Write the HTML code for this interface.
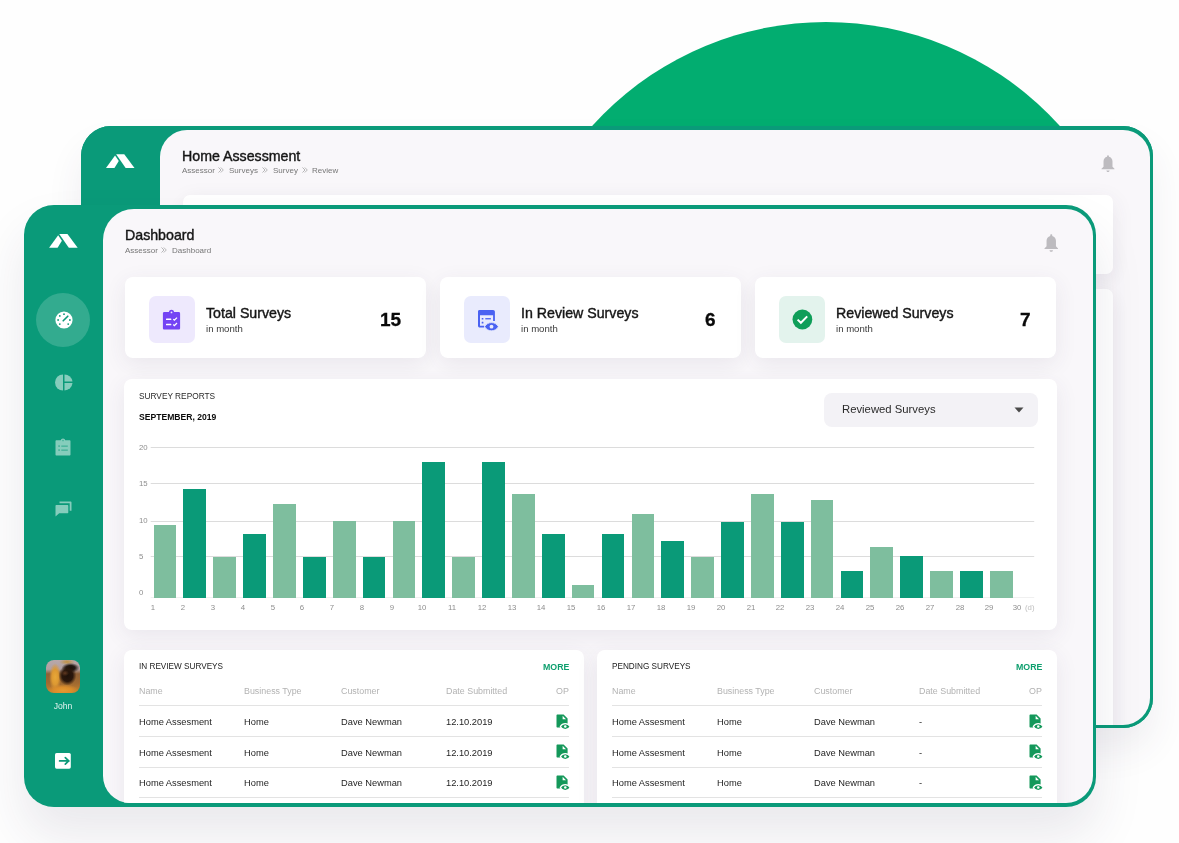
<!DOCTYPE html>
<html><head><meta charset="utf-8"><style>
*{margin:0;padding:0;box-sizing:border-box}
html,body{width:1179px;height:843px;overflow:hidden;background:#fefefe;font-family:"Liberation Sans",sans-serif;color:#111}
.a{position:absolute}
.t{position:absolute;white-space:nowrap;line-height:1;will-change:transform}
.card{position:absolute;background:#fff;border-radius:7px;box-shadow:0 6px 22px rgba(70,60,90,0.085)}
.clip{position:absolute;overflow:hidden}
.inner{position:absolute;width:1179px;height:843px}
svg{position:absolute;overflow:visible}
</style></head><body>
<div class="a" style="left:511px;top:22px;width:630px;height:630px;border-radius:50%;background:#02ad70"></div>
<div class="a" style="left:81px;top:126px;width:1072px;height:601.5px;background:#0a9a79;border-radius:30px;box-shadow:0 22px 36px rgba(60,50,90,0.08)"></div>
<div class="a" style="left:81px;top:126px;width:1072px;height:601.5px;background:#0a9a79;border-radius:30px"></div>
<div class="clip" style="left:160px;top:129.5px;width:989.5px;height:595px;border-radius:27px;background:#f9f7fa"><div class="inner" style="left:-160px;top:-129.5px"><div class="t" style="left:182.00px;top:148.98px;font-size:14.2px;color:#161616;font-weight:normal;-webkit-text-stroke:0.4px currentColor;">Home Assessment</div><div class="t" style="left:181.60px;top:167.23px;font-size:8.0px;color:#767676;font-weight:normal;">Assessor</div><div class="t" style="left:228.70px;top:167.23px;font-size:8.0px;color:#767676;font-weight:normal;">Surveys</div><div class="t" style="left:272.50px;top:167.23px;font-size:8.0px;color:#767676;font-weight:normal;">Survey</div><div class="t" style="left:312.40px;top:167.23px;font-size:8.0px;color:#767676;font-weight:normal;">Review</div><svg class="a" style="left:218.3px;top:167.3px" width="6" height="6" viewBox="0 0 6 6"><path d="M0.5 0.5 L3 3 L0.5 5.5 M2.8 0.5 L5.3 3 L2.8 5.5" stroke="#9a9a9a" stroke-width="0.7" fill="none"/></svg><svg class="a" style="left:262.3px;top:167.3px" width="6" height="6" viewBox="0 0 6 6"><path d="M0.5 0.5 L3 3 L0.5 5.5 M2.8 0.5 L5.3 3 L2.8 5.5" stroke="#9a9a9a" stroke-width="0.7" fill="none"/></svg><svg class="a" style="left:301.7px;top:167.3px" width="6" height="6" viewBox="0 0 6 6"><path d="M0.5 0.5 L3 3 L0.5 5.5 M2.8 0.5 L5.3 3 L2.8 5.5" stroke="#9a9a9a" stroke-width="0.7" fill="none"/></svg><svg class="a" style="left:1101px;top:155px" width="14" height="17.2" viewBox="0 0 14 18"><path d="M7 0.2c0.6 0 1 0.4 1 1v0.7c2.3 0.5 3.7 2.5 3.7 4.9v5.4l2.1 2.2v0.6H0.2v-0.6l2.1-2.2V6.8c0-2.4 1.4-4.4 3.7-4.9V1.2c0-0.6 0.4-1 1-1z" fill="#bdbbbf"/><path d="M5.3 16.2h3.4c0 0.9-0.8 1.6-1.7 1.6s-1.7-0.7-1.7-1.6z" fill="#bdbbbf"/></svg><div class="card" style="left:183px;top:195px;width:930px;height:79px"></div><div class="card" style="left:183px;top:289px;width:930px;height:600px"></div></div></div>
<svg class="a" style="left:106px;top:154px" width="28.5" height="14.3" viewBox="0 0 29 14"><path d="M0 14 L9.2 1.2 L13 6.8 L8.6 14 Z" fill="#fff"/><path d="M10.3 0 L18.6 0 L29 14 L20 14 Z" fill="#fff"/></svg>
<div class="a" style="left:24px;top:205px;width:1072px;height:602px;background:#0a9a79;border-radius:30px;box-shadow:0 28px 50px rgba(50,40,80,0.10)"></div>
<div class="clip" style="left:103px;top:209px;width:989.5px;height:594px;border-radius:31px 27px 27px 27px;background:#f9f7fa"><div class="inner" style="left:-103px;top:-209px"><div class="t" style="left:125.00px;top:227.98px;font-size:14.2px;color:#161616;font-weight:normal;-webkit-text-stroke:0.4px currentColor;">Dashboard</div><div class="t" style="left:124.90px;top:246.63px;font-size:8.0px;color:#767676;font-weight:normal;">Assessor</div><svg class="a" style="left:161.2px;top:247.2px" width="6" height="6" viewBox="0 0 6 6"><path d="M0.5 0.5 L3 3 L0.5 5.5 M2.8 0.5 L5.3 3 L2.8 5.5" stroke="#9a9a9a" stroke-width="0.7" fill="none"/></svg><div class="t" style="left:171.90px;top:246.63px;font-size:8.0px;color:#767676;font-weight:normal;">Dashboard</div><svg class="a" style="left:1044px;top:234px" width="14.5" height="18" viewBox="0 0 14 18"><path d="M7 0.2c0.6 0 1 0.4 1 1v0.7c2.3 0.5 3.7 2.5 3.7 4.9v5.4l2.1 2.2v0.6H0.2v-0.6l2.1-2.2V6.8c0-2.4 1.4-4.4 3.7-4.9V1.2c0-0.6 0.4-1 1-1z" fill="#bdbbbf"/><path d="M5.3 16.2h3.4c0 0.9-0.8 1.6-1.7 1.6s-1.7-0.7-1.7-1.6z" fill="#bdbbbf"/></svg><div class="card" style="left:125px;top:277px;width:301px;height:81px;border-radius:8px"></div><div class="a" style="left:149px;top:296px;width:46px;height:47px;background:#eee9fd;border-radius:7px"></div><div class="t" style="left:205.80px;top:305.68px;font-size:14.2px;color:#161616;font-weight:normal;-webkit-text-stroke:0.4px currentColor;">Total Surveys</div><div class="t" style="left:205.80px;top:323.67px;font-size:9.6px;color:#3a3a3a;font-weight:normal;">in month</div><div class="t" style="right:778.00px;top:309.72px;font-size:19px;color:#0a0a0a;font-weight:bold;-webkit-text-stroke:0.3px currentColor;">15</div><svg class="a" style="left:162px;top:309px" width="19" height="22" viewBox="0 0 19 22"><path d="M2.3 3h4.6c0.3-1.5 1.3-2.3 2.6-2.3s2.3 0.8 2.6 2.3h4.6c0.8 0 1.4 0.6 1.4 1.4v14.8c0 0.8-0.6 1.4-1.4 1.4H2.3c-0.8 0-1.4-0.6-1.4-1.4V4.4C0.9 3.6 1.5 3 2.3 3z" fill="#7444f4"/><circle cx="9.5" cy="3.4" r="0.9" fill="#eee9fd"/><rect x="4" y="9.4" width="5.3" height="1.5" rx="0.5" fill="#fff"/><rect x="4" y="14.8" width="5.3" height="1.5" rx="0.5" fill="#fff"/><path d="M11.3 10.1l1.1 1.1 2.6-2.6 M11.3 15.5l1.1 1.1 2.6-2.6" stroke="#fff" stroke-width="1.3" fill="none"/></svg><div class="card" style="left:440px;top:277px;width:301px;height:81px;border-radius:8px"></div><div class="a" style="left:464px;top:296px;width:46px;height:47px;background:#e9ebfd;border-radius:7px"></div><div class="t" style="left:520.80px;top:305.68px;font-size:14.2px;color:#161616;font-weight:normal;-webkit-text-stroke:0.4px currentColor;">In Review Surveys</div><div class="t" style="left:520.80px;top:323.67px;font-size:9.6px;color:#3a3a3a;font-weight:normal;">in month</div><div class="t" style="right:463.00px;top:309.72px;font-size:19px;color:#0a0a0a;font-weight:bold;-webkit-text-stroke:0.3px currentColor;">6</div><svg class="a" style="left:477px;top:309px" width="23" height="23" viewBox="0 0 23 23"><path d="M2.3 1h13.8c1 0 1.8 0.8 1.8 1.8v9.1h-1.8V6.2H3v10.6h4.2v1.7H2.8c-1 0-1.8-0.8-1.8-1.8V2.8C1 1.8 1.3 1 2.3 1z" fill="#4a62f2"/><rect x="4.7" y="8.9" width="1.7" height="1.7" rx="0.3" fill="#4a62f2"/><rect x="8.3" y="9.1" width="5.6" height="1.3" fill="#4a62f2"/><rect x="4.7" y="12.8" width="1.7" height="1.7" rx="0.3" fill="#4a62f2"/><path d="M7.6 17.7c1.6-2.6 3.9-4.1 6.9-4.1s5.3 1.5 6.9 4.1c-1.6 2.6-3.9 4.1-6.9 4.1s-5.3-1.5-6.9-4.1z" fill="#4a62f2" stroke="#e9ebfd" stroke-width="0.8"/><circle cx="14.5" cy="17.7" r="1.9" fill="#e9ebfd"/></svg><div class="card" style="left:755px;top:277px;width:301px;height:81px;border-radius:8px"></div><div class="a" style="left:779px;top:296px;width:46px;height:47px;background:#e3f3ed;border-radius:7px"></div><div class="t" style="left:835.80px;top:305.68px;font-size:14.2px;color:#161616;font-weight:normal;-webkit-text-stroke:0.4px currentColor;">Reviewed Surveys</div><div class="t" style="left:835.80px;top:323.67px;font-size:9.6px;color:#3a3a3a;font-weight:normal;">in month</div><div class="t" style="right:148.00px;top:309.72px;font-size:19px;color:#0a0a0a;font-weight:bold;-webkit-text-stroke:0.3px currentColor;">7</div><svg class="a" style="left:792px;top:309px" width="21" height="21" viewBox="0 0 21 21"><circle cx="10.4" cy="10.5" r="9.9" fill="#0f9e59"/><path d="M5.6 10.6l3.3 3.2 6.3-6.4" stroke="#fff" stroke-width="2" fill="none"/></svg><div class="card" style="left:124px;top:379px;width:932.5px;height:251px;border-radius:8px"></div><div class="t" style="left:138.80px;top:392.37px;font-size:8.3px;color:#2a2a2a;font-weight:normal;">SURVEY REPORTS</div><div class="t" style="left:138.80px;top:413.32px;font-size:8.6px;color:#0a0a0a;font-weight:bold;">SEPTEMBER, 2019</div><div class="a" style="left:824px;top:393px;width:214px;height:34px;background:#f3f2f6;border-radius:8px"></div><div class="t" style="left:842.40px;top:404.43px;font-size:11.3px;color:#2a2a2a;font-weight:normal;">Reviewed Surveys</div><svg class="a" style="left:1014px;top:407px" width="10" height="6" viewBox="0 0 10 6"><path d="M0.5 0.5h9L5 5.6z" fill="#4a4a4a"/></svg><svg class="a" style="left:0;top:0" width="1179" height="843"><rect x="150.7" y="447.0" width="883.5" height="1" fill="#dcdcdc"/><rect x="150.7" y="483.0" width="883.5" height="1" fill="#dcdcdc"/><rect x="150.7" y="521.0" width="883.5" height="1" fill="#dcdcdc"/><rect x="150.7" y="556.0" width="883.5" height="1" fill="#dcdcdc"/><rect x="150.7" y="597" width="883.5" height="1" fill="#f0f0f0"/></svg><div class="t" style="left:139.00px;top:443.70px;font-size:7.8px;color:#8e8e8e;font-weight:normal;">20</div><div class="t" style="left:139.00px;top:480.20px;font-size:7.8px;color:#8e8e8e;font-weight:normal;">15</div><div class="t" style="left:139.00px;top:516.70px;font-size:7.8px;color:#8e8e8e;font-weight:normal;">10</div><div class="t" style="left:139.00px;top:553.20px;font-size:7.8px;color:#8e8e8e;font-weight:normal;">5</div><div class="t" style="left:139.00px;top:589.20px;font-size:7.8px;color:#8e8e8e;font-weight:normal;">0</div><div class="a" style="left:153.60px;top:524.6px;width:22.7px;height:73.20px;background:#7ebe9e"></div><div class="a" style="left:183.47px;top:489px;width:22.7px;height:108.80px;background:#0a9a78"></div><div class="a" style="left:213.34px;top:556.6px;width:22.7px;height:41.20px;background:#7ebe9e"></div><div class="a" style="left:243.21px;top:534px;width:22.7px;height:63.80px;background:#0a9a78"></div><div class="a" style="left:273.08px;top:504px;width:22.7px;height:93.80px;background:#7ebe9e"></div><div class="a" style="left:302.95px;top:556.7px;width:22.7px;height:41.10px;background:#0a9a78"></div><div class="a" style="left:332.82px;top:521px;width:22.7px;height:76.80px;background:#7ebe9e"></div><div class="a" style="left:362.69px;top:556.7px;width:22.7px;height:41.10px;background:#0a9a78"></div><div class="a" style="left:392.56px;top:521px;width:22.7px;height:76.80px;background:#7ebe9e"></div><div class="a" style="left:422.43px;top:462px;width:22.7px;height:135.80px;background:#0a9a78"></div><div class="a" style="left:452.30px;top:556.7px;width:22.7px;height:41.10px;background:#7ebe9e"></div><div class="a" style="left:482.17px;top:462px;width:22.7px;height:135.80px;background:#0a9a78"></div><div class="a" style="left:512.04px;top:494px;width:22.7px;height:103.80px;background:#7ebe9e"></div><div class="a" style="left:541.91px;top:534px;width:22.7px;height:63.80px;background:#0a9a78"></div><div class="a" style="left:571.78px;top:585px;width:22.7px;height:12.80px;background:#7ebe9e"></div><div class="a" style="left:601.65px;top:534px;width:22.7px;height:63.80px;background:#0a9a78"></div><div class="a" style="left:631.52px;top:514.4px;width:22.7px;height:83.40px;background:#7ebe9e"></div><div class="a" style="left:661.39px;top:541px;width:22.7px;height:56.80px;background:#0a9a78"></div><div class="a" style="left:691.26px;top:556.7px;width:22.7px;height:41.10px;background:#7ebe9e"></div><div class="a" style="left:721.13px;top:521.5px;width:22.7px;height:76.30px;background:#0a9a78"></div><div class="a" style="left:751.00px;top:494px;width:22.7px;height:103.80px;background:#7ebe9e"></div><div class="a" style="left:780.87px;top:521.5px;width:22.7px;height:76.30px;background:#0a9a78"></div><div class="a" style="left:810.74px;top:500px;width:22.7px;height:97.80px;background:#7ebe9e"></div><div class="a" style="left:840.61px;top:571px;width:22.7px;height:26.80px;background:#0a9a78"></div><div class="a" style="left:870.48px;top:547px;width:22.7px;height:50.80px;background:#7ebe9e"></div><div class="a" style="left:900.35px;top:556px;width:22.7px;height:41.80px;background:#0a9a78"></div><div class="a" style="left:930.22px;top:571px;width:22.7px;height:26.80px;background:#7ebe9e"></div><div class="a" style="left:960.09px;top:571px;width:22.7px;height:26.80px;background:#0a9a78"></div><div class="a" style="left:989.96px;top:571px;width:22.7px;height:26.80px;background:#7ebe9e"></div><div class="t" style="left:53.10px;width:200px;text-align:center;top:603.70px;font-size:7.8px;color:#8e8e8e;font-weight:normal;">1</div><div class="t" style="left:82.97px;width:200px;text-align:center;top:603.70px;font-size:7.8px;color:#8e8e8e;font-weight:normal;">2</div><div class="t" style="left:112.84px;width:200px;text-align:center;top:603.70px;font-size:7.8px;color:#8e8e8e;font-weight:normal;">3</div><div class="t" style="left:142.71px;width:200px;text-align:center;top:603.70px;font-size:7.8px;color:#8e8e8e;font-weight:normal;">4</div><div class="t" style="left:172.58px;width:200px;text-align:center;top:603.70px;font-size:7.8px;color:#8e8e8e;font-weight:normal;">5</div><div class="t" style="left:202.45px;width:200px;text-align:center;top:603.70px;font-size:7.8px;color:#8e8e8e;font-weight:normal;">6</div><div class="t" style="left:232.32px;width:200px;text-align:center;top:603.70px;font-size:7.8px;color:#8e8e8e;font-weight:normal;">7</div><div class="t" style="left:262.19px;width:200px;text-align:center;top:603.70px;font-size:7.8px;color:#8e8e8e;font-weight:normal;">8</div><div class="t" style="left:292.06px;width:200px;text-align:center;top:603.70px;font-size:7.8px;color:#8e8e8e;font-weight:normal;">9</div><div class="t" style="left:321.93px;width:200px;text-align:center;top:603.70px;font-size:7.8px;color:#8e8e8e;font-weight:normal;">10</div><div class="t" style="left:351.80px;width:200px;text-align:center;top:603.70px;font-size:7.8px;color:#8e8e8e;font-weight:normal;">11</div><div class="t" style="left:381.67px;width:200px;text-align:center;top:603.70px;font-size:7.8px;color:#8e8e8e;font-weight:normal;">12</div><div class="t" style="left:411.54px;width:200px;text-align:center;top:603.70px;font-size:7.8px;color:#8e8e8e;font-weight:normal;">13</div><div class="t" style="left:441.41px;width:200px;text-align:center;top:603.70px;font-size:7.8px;color:#8e8e8e;font-weight:normal;">14</div><div class="t" style="left:471.28px;width:200px;text-align:center;top:603.70px;font-size:7.8px;color:#8e8e8e;font-weight:normal;">15</div><div class="t" style="left:501.15px;width:200px;text-align:center;top:603.70px;font-size:7.8px;color:#8e8e8e;font-weight:normal;">16</div><div class="t" style="left:531.02px;width:200px;text-align:center;top:603.70px;font-size:7.8px;color:#8e8e8e;font-weight:normal;">17</div><div class="t" style="left:560.89px;width:200px;text-align:center;top:603.70px;font-size:7.8px;color:#8e8e8e;font-weight:normal;">18</div><div class="t" style="left:590.76px;width:200px;text-align:center;top:603.70px;font-size:7.8px;color:#8e8e8e;font-weight:normal;">19</div><div class="t" style="left:620.63px;width:200px;text-align:center;top:603.70px;font-size:7.8px;color:#8e8e8e;font-weight:normal;">20</div><div class="t" style="left:650.50px;width:200px;text-align:center;top:603.70px;font-size:7.8px;color:#8e8e8e;font-weight:normal;">21</div><div class="t" style="left:680.37px;width:200px;text-align:center;top:603.70px;font-size:7.8px;color:#8e8e8e;font-weight:normal;">22</div><div class="t" style="left:710.24px;width:200px;text-align:center;top:603.70px;font-size:7.8px;color:#8e8e8e;font-weight:normal;">23</div><div class="t" style="left:740.11px;width:200px;text-align:center;top:603.70px;font-size:7.8px;color:#8e8e8e;font-weight:normal;">24</div><div class="t" style="left:769.98px;width:200px;text-align:center;top:603.70px;font-size:7.8px;color:#8e8e8e;font-weight:normal;">25</div><div class="t" style="left:799.85px;width:200px;text-align:center;top:603.70px;font-size:7.8px;color:#8e8e8e;font-weight:normal;">26</div><div class="t" style="left:829.72px;width:200px;text-align:center;top:603.70px;font-size:7.8px;color:#8e8e8e;font-weight:normal;">27</div><div class="t" style="left:859.59px;width:200px;text-align:center;top:603.70px;font-size:7.8px;color:#8e8e8e;font-weight:normal;">28</div><div class="t" style="left:889.46px;width:200px;text-align:center;top:603.70px;font-size:7.8px;color:#8e8e8e;font-weight:normal;">29</div><div class="t" style="left:917.00px;width:200px;text-align:center;top:603.70px;font-size:7.8px;color:#8e8e8e;font-weight:normal;">30</div><div class="t" style="left:1024.50px;top:603.70px;font-size:7.8px;color:#c0c0c0;font-weight:normal;">(d)</div><div class="card" style="left:124px;top:649.5px;width:460px;height:250px;border-radius:8px"></div><div class="t" style="left:139.00px;top:663.36px;font-size:8.2px;color:#222;font-weight:normal;">IN REVIEW SURVEYS</div><div class="t" style="right:610.00px;top:662.85px;font-size:8.8px;color:#0e9f6e;font-weight:bold;">MORE</div><div class="t" style="left:139.00px;top:687.17px;font-size:8.9px;color:#b2b2b2;font-weight:normal;">Name</div><div class="t" style="left:244.20px;top:687.17px;font-size:8.9px;color:#b2b2b2;font-weight:normal;">Business Type</div><div class="t" style="left:341.00px;top:687.17px;font-size:8.9px;color:#b2b2b2;font-weight:normal;">Customer</div><div class="t" style="left:446.00px;top:687.17px;font-size:8.9px;color:#b2b2b2;font-weight:normal;">Date Submitted</div><div class="t" style="right:610.00px;top:687.17px;font-size:8.9px;color:#b2b2b2;font-weight:normal;">OP</div><div class="a" style="left:139px;top:704.6px;width:430px;height:1.0px;background:#e3e3e3"></div><div class="a" style="left:139px;top:736px;width:430px;height:1px;background:#e3e3e3"></div><div class="a" style="left:139px;top:766.8px;width:430px;height:1.0px;background:#e3e3e3"></div><div class="a" style="left:139px;top:796.6px;width:430px;height:1.0px;background:#e3e3e3"></div><div class="t" style="left:139.00px;top:717.83px;font-size:9.3px;color:#1e1e1e;font-weight:normal;">Home Assesment</div><div class="t" style="left:244.20px;top:717.83px;font-size:9.3px;color:#1e1e1e;font-weight:normal;">Home</div><div class="t" style="left:341.00px;top:717.83px;font-size:9.3px;color:#1e1e1e;font-weight:normal;">Dave Newman</div><div class="t" style="left:446.00px;top:717.83px;font-size:9.3px;color:#1e1e1e;font-weight:normal;">12.10.2019</div><svg class="a" style="left:554.5px;top:713.5px" width="16" height="17" viewBox="0 0 16 17"><path d="M2.5 0.4H8.6L12.6 4.5V13.5H2.5c-0.6 0-1-0.4-1-1V1.4c0-0.6 0.4-1 1-1z" fill="#14985a"/><path d="M7.6 1.8V5.3H11z" fill="#fff"/><path d="M5.3 12.6c1.1-1.9 2.8-3 4.95-3s3.85 1.1 4.95 3c-1.1 1.9-2.8 3-4.95 3s-3.85-1.1-4.95-3z" fill="#14985a" stroke="#fff" stroke-width="1.1"/><circle cx="10.25" cy="12.6" r="1.25" fill="#fff"/></svg><div class="t" style="left:139.00px;top:748.53px;font-size:9.3px;color:#1e1e1e;font-weight:normal;">Home Assesment</div><div class="t" style="left:244.20px;top:748.53px;font-size:9.3px;color:#1e1e1e;font-weight:normal;">Home</div><div class="t" style="left:341.00px;top:748.53px;font-size:9.3px;color:#1e1e1e;font-weight:normal;">Dave Newman</div><div class="t" style="left:446.00px;top:748.53px;font-size:9.3px;color:#1e1e1e;font-weight:normal;">12.10.2019</div><svg class="a" style="left:554.5px;top:744.3px" width="16" height="17" viewBox="0 0 16 17"><path d="M2.5 0.4H8.6L12.6 4.5V13.5H2.5c-0.6 0-1-0.4-1-1V1.4c0-0.6 0.4-1 1-1z" fill="#14985a"/><path d="M7.6 1.8V5.3H11z" fill="#fff"/><path d="M5.3 12.6c1.1-1.9 2.8-3 4.95-3s3.85 1.1 4.95 3c-1.1 1.9-2.8 3-4.95 3s-3.85-1.1-4.95-3z" fill="#14985a" stroke="#fff" stroke-width="1.1"/><circle cx="10.25" cy="12.6" r="1.25" fill="#fff"/></svg><div class="t" style="left:139.00px;top:779.23px;font-size:9.3px;color:#1e1e1e;font-weight:normal;">Home Assesment</div><div class="t" style="left:244.20px;top:779.23px;font-size:9.3px;color:#1e1e1e;font-weight:normal;">Home</div><div class="t" style="left:341.00px;top:779.23px;font-size:9.3px;color:#1e1e1e;font-weight:normal;">Dave Newman</div><div class="t" style="left:446.00px;top:779.23px;font-size:9.3px;color:#1e1e1e;font-weight:normal;">12.10.2019</div><svg class="a" style="left:554.5px;top:775.1px" width="16" height="17" viewBox="0 0 16 17"><path d="M2.5 0.4H8.6L12.6 4.5V13.5H2.5c-0.6 0-1-0.4-1-1V1.4c0-0.6 0.4-1 1-1z" fill="#14985a"/><path d="M7.6 1.8V5.3H11z" fill="#fff"/><path d="M5.3 12.6c1.1-1.9 2.8-3 4.95-3s3.85 1.1 4.95 3c-1.1 1.9-2.8 3-4.95 3s-3.85-1.1-4.95-3z" fill="#14985a" stroke="#fff" stroke-width="1.1"/><circle cx="10.25" cy="12.6" r="1.25" fill="#fff"/></svg><div class="card" style="left:597px;top:649.5px;width:460px;height:250px;border-radius:8px"></div><div class="t" style="left:612.00px;top:663.36px;font-size:8.2px;color:#222;font-weight:normal;">PENDING SURVEYS</div><div class="t" style="right:137.00px;top:662.85px;font-size:8.8px;color:#0e9f6e;font-weight:bold;">MORE</div><div class="t" style="left:612.00px;top:687.17px;font-size:8.9px;color:#b2b2b2;font-weight:normal;">Name</div><div class="t" style="left:717.20px;top:687.17px;font-size:8.9px;color:#b2b2b2;font-weight:normal;">Business Type</div><div class="t" style="left:814.00px;top:687.17px;font-size:8.9px;color:#b2b2b2;font-weight:normal;">Customer</div><div class="t" style="left:919.00px;top:687.17px;font-size:8.9px;color:#b2b2b2;font-weight:normal;">Date Submitted</div><div class="t" style="right:137.00px;top:687.17px;font-size:8.9px;color:#b2b2b2;font-weight:normal;">OP</div><div class="a" style="left:612px;top:704.6px;width:430px;height:1.0px;background:#e3e3e3"></div><div class="a" style="left:612px;top:736px;width:430px;height:1px;background:#e3e3e3"></div><div class="a" style="left:612px;top:766.8px;width:430px;height:1.0px;background:#e3e3e3"></div><div class="a" style="left:612px;top:796.6px;width:430px;height:1.0px;background:#e3e3e3"></div><div class="t" style="left:612.00px;top:717.83px;font-size:9.3px;color:#1e1e1e;font-weight:normal;">Home Assesment</div><div class="t" style="left:717.20px;top:717.83px;font-size:9.3px;color:#1e1e1e;font-weight:normal;">Home</div><div class="t" style="left:814.00px;top:717.83px;font-size:9.3px;color:#1e1e1e;font-weight:normal;">Dave Newman</div><div class="t" style="left:919.00px;top:717.83px;font-size:9.3px;color:#1e1e1e;font-weight:normal;">-</div><svg class="a" style="left:1027.5px;top:713.5px" width="16" height="17" viewBox="0 0 16 17"><path d="M2.5 0.4H8.6L12.6 4.5V13.5H2.5c-0.6 0-1-0.4-1-1V1.4c0-0.6 0.4-1 1-1z" fill="#14985a"/><path d="M7.6 1.8V5.3H11z" fill="#fff"/><path d="M5.3 12.6c1.1-1.9 2.8-3 4.95-3s3.85 1.1 4.95 3c-1.1 1.9-2.8 3-4.95 3s-3.85-1.1-4.95-3z" fill="#14985a" stroke="#fff" stroke-width="1.1"/><circle cx="10.25" cy="12.6" r="1.25" fill="#fff"/></svg><div class="t" style="left:612.00px;top:748.53px;font-size:9.3px;color:#1e1e1e;font-weight:normal;">Home Assesment</div><div class="t" style="left:717.20px;top:748.53px;font-size:9.3px;color:#1e1e1e;font-weight:normal;">Home</div><div class="t" style="left:814.00px;top:748.53px;font-size:9.3px;color:#1e1e1e;font-weight:normal;">Dave Newman</div><div class="t" style="left:919.00px;top:748.53px;font-size:9.3px;color:#1e1e1e;font-weight:normal;">-</div><svg class="a" style="left:1027.5px;top:744.3px" width="16" height="17" viewBox="0 0 16 17"><path d="M2.5 0.4H8.6L12.6 4.5V13.5H2.5c-0.6 0-1-0.4-1-1V1.4c0-0.6 0.4-1 1-1z" fill="#14985a"/><path d="M7.6 1.8V5.3H11z" fill="#fff"/><path d="M5.3 12.6c1.1-1.9 2.8-3 4.95-3s3.85 1.1 4.95 3c-1.1 1.9-2.8 3-4.95 3s-3.85-1.1-4.95-3z" fill="#14985a" stroke="#fff" stroke-width="1.1"/><circle cx="10.25" cy="12.6" r="1.25" fill="#fff"/></svg><div class="t" style="left:612.00px;top:779.23px;font-size:9.3px;color:#1e1e1e;font-weight:normal;">Home Assesment</div><div class="t" style="left:717.20px;top:779.23px;font-size:9.3px;color:#1e1e1e;font-weight:normal;">Home</div><div class="t" style="left:814.00px;top:779.23px;font-size:9.3px;color:#1e1e1e;font-weight:normal;">Dave Newman</div><div class="t" style="left:919.00px;top:779.23px;font-size:9.3px;color:#1e1e1e;font-weight:normal;">-</div><svg class="a" style="left:1027.5px;top:775.1px" width="16" height="17" viewBox="0 0 16 17"><path d="M2.5 0.4H8.6L12.6 4.5V13.5H2.5c-0.6 0-1-0.4-1-1V1.4c0-0.6 0.4-1 1-1z" fill="#14985a"/><path d="M7.6 1.8V5.3H11z" fill="#fff"/><path d="M5.3 12.6c1.1-1.9 2.8-3 4.95-3s3.85 1.1 4.95 3c-1.1 1.9-2.8 3-4.95 3s-3.85-1.1-4.95-3z" fill="#14985a" stroke="#fff" stroke-width="1.1"/><circle cx="10.25" cy="12.6" r="1.25" fill="#fff"/></svg></div></div>
<svg class="a" style="left:49px;top:234px" width="28.8" height="13.8" viewBox="0 0 29 14"><path d="M0 14 L9.2 1.2 L13 6.8 L8.6 14 Z" fill="#fff"/><path d="M10.3 0 L18.6 0 L29 14 L20 14 Z" fill="#fff"/></svg><div class="a" style="left:36px;top:292.5px;width:54px;height:54px;border-radius:50%;background:rgba(255,255,255,0.17)"></div><svg class="a" style="left:54.5px;top:310.5px" width="18" height="18" viewBox="0 0 18 18"><circle cx="9" cy="9" r="8.6" fill="#fff"/><g fill="#0a9a79"><circle cx="9" cy="3.2" r="0.9"/><circle cx="4.8" cy="4.9" r="0.9"/><circle cx="3.1" cy="9" r="0.9"/><circle cx="4.8" cy="13.1" r="0.9"/><circle cx="13.2" cy="13.1" r="0.9"/><circle cx="14.9" cy="9" r="0.9"/></g><path d="M8.2 9.8 L12.8 5.2" stroke="#0a9a79" stroke-width="1.6" stroke-linecap="round"/></svg><svg class="a" style="left:54.5px;top:374px" width="18" height="17" viewBox="0 0 18 17"><path d="M8 0.5 A8 8 0 0 0 8 16.5 Z" fill="rgba(255,255,255,0.5)"/><path d="M9.5 0.5 A8 8 0 0 1 17.5 7.6 H9.5 Z" fill="rgba(255,255,255,0.5)"/><path d="M9.5 9.1 H17.5 A8 8 0 0 1 9.5 16.5 Z" fill="rgba(255,255,255,0.5)"/></svg><svg class="a" style="left:55px;top:437.5px" width="16" height="18" viewBox="0 0 16 18"><path d="M1.5 2.3h4.3c0.2-1.1 1-1.8 2.2-1.8s2 0.7 2.2 1.8h4.3c0.6 0 1 0.4 1 1v13.2c0 0.6-0.4 1-1 1h-13c-0.6 0-1-0.4-1-1V3.3c0-0.6 0.4-1 1-1z" fill="rgba(255,255,255,0.5)"/><g fill="#0a9a79" opacity="0.55"><circle cx="8" cy="2.6" r="0.8"/><rect x="3.3" y="7.3" width="1.6" height="1.6"/><rect x="6.3" y="7.5" width="6.5" height="1.3"/><rect x="3.3" y="11.3" width="1.6" height="1.6"/><rect x="6.3" y="11.5" width="6.5" height="1.3"/></g></svg><svg class="a" style="left:54.5px;top:500.5px" width="17" height="16" viewBox="0 0 17 16"><path d="M4.5 0.5h11c0.6 0 1 0.4 1 1v8.3h-1.8V2.3H4.5z" fill="rgba(255,255,255,0.5)"/><path d="M1.5 4h10.8c0.6 0 1 0.4 1 1v6.3c0 0.6-0.4 1-1 1H4.2L0.5 15.5V5c0-0.6 0.4-1 1-1z" fill="rgba(255,255,255,0.5)"/></svg><div class="a" style="left:46.3px;top:659.6px;width:33.5px;height:33.4px;border-radius:8px;overflow:hidden;background:radial-gradient(ellipse 4px 3px at 56% 40%, rgba(120,70,40,0.7) 0%, rgba(120,70,40,0) 100%),radial-gradient(ellipse 9px 10px at 63% 47%, #1e110a 0%, #2a170c 60%, rgba(42,23,12,0) 100%),radial-gradient(ellipse 9px 5px at 72% 24%, #150b06 0%, rgba(21,11,6,0.9) 50%, rgba(21,11,6,0) 100%),radial-gradient(ellipse 8px 3px at 62% 6%, #c09040 0%, rgba(192,144,64,0) 100%),radial-gradient(ellipse 16px 6px at 50% 92%, #e49a32 0%, #dc8e2c 50%, rgba(220,142,44,0) 100%),radial-gradient(ellipse 6px 14px at 27% 52%, #e8a838 0%, #dc9832 55%, rgba(220,152,50,0) 100%),linear-gradient(180deg,#b8a8aa 0%,#b0a0a2 28%,#8e6036 42%,#a06a30 70%,#c88430 100%)"></div><div class="t" style="left:-37.20px;width:200px;text-align:center;top:702.02px;font-size:8.6px;color:rgba(255,255,255,0.88);font-weight:normal;">John</div><svg class="a" style="left:55px;top:753.2px" width="16" height="16" viewBox="0 0 16 16"><rect x="0" y="0" width="15.8" height="15.7" rx="1.6" fill="#fff"/><path d="M4.6 7.9h9.3 M10.3 4.6l3.4 3.3-3.4 3.3" stroke="#0a9a79" stroke-width="1.7" fill="none" stroke-linecap="round" stroke-linejoin="round"/></svg>
</body></html>
